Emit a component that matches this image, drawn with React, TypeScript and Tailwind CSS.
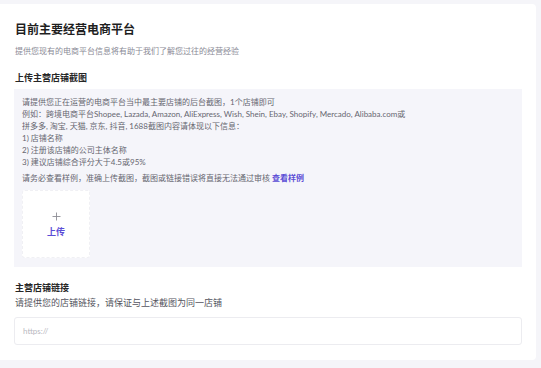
import React from "react";

const font = { fontFamily: 'Lato, "Noto Sans CJK SC", sans-serif' };

export default function App() {
  return (
    <div className="w-[541px] h-[368px] bg-[#f5f5f9] pt-[4px] pb-[8px] pr-[5px] overflow-hidden" style={font}>
      <div className="h-[356px] bg-white rounded-r-[4px] pl-[14px] pr-[14px] pt-[18px]">
        <div className="pl-[1px] text-[12px] leading-[16px] font-bold text-[#1f1f1f]">目前主要经营电商平台</div>
        <div className="pl-[1px] mt-[7px] text-[8px] leading-[12px] text-[#8a8a96]">提供您现有的电商平台信息将有助于我们了解您过往的经营经验</div>
        <div className="pl-[1px] mt-[15px] text-[9px] leading-[12px] font-bold text-[#262626]">上传主营店铺截图</div>
        <div className="mt-[5px] h-[178px] bg-[#f5f5fa] pl-[8px] pt-[7px]">
          <div className="text-[8px] leading-[12px] text-[#666670]">
            <div>请提供您正在运营的电商平台当中最主要店铺的后台截图，1个店铺即可</div>
            <div>例如：跨境电商平台Shopee, Lazada, Amazon, AliExpress, Wish, Shein, Ebay, Shopify, Mercado, Alibaba.com或</div>
            <div>拼多多, 淘宝, 天猫, 京东, 抖音, 1688截图内容请体现以下信息：</div>
            <div>1) 店铺名称</div>
            <div>2) 注册该店铺的公司主体名称</div>
            <div>3) 建议店铺综合评分大于4.5或95%</div>
            <div className="mt-[4px]">
              请务必查看样例，准确上传截图，截图或链接错误将直接无法通过审核{" "}
              <span className="font-bold text-[#5b4dd6]">查看样例</span>
            </div>
          </div>
          <div className="mt-[6px] w-[68px] h-[68px] bg-white rounded-[3px] border border-dashed border-[#f0f0f4] flex flex-col items-center justify-center">
            <svg width="9" height="9" viewBox="0 0 9 9" className="mt-[1px]">
              <path d="M4.5 0.5V8.5M0.5 4.5H8.5" stroke="#8c8c94" strokeWidth="0.9" fill="none" />
            </svg>
            <div className="mt-[5px] text-[9px] leading-[12px] font-bold text-[#5b4dd6]">上传</div>
          </div>
        </div>
        <div className="pl-[1px] mt-[15px] text-[9px] leading-[12px] font-bold text-[#262626]">主营店铺链接</div>
        <div className="pl-[1px] mt-[3px] text-[9px] leading-[12px] text-[#555560]">请提供您的店铺链接，请保证与上述截图为同一店铺</div>
        <div className="mt-[8px] h-[28px] border border-[#ececf0] rounded-[3px] flex items-center pl-[8px]">
          <span className="text-[8px] text-[#b8b8c0]">https://</span>
        </div>
      </div>
    </div>
  );
}
